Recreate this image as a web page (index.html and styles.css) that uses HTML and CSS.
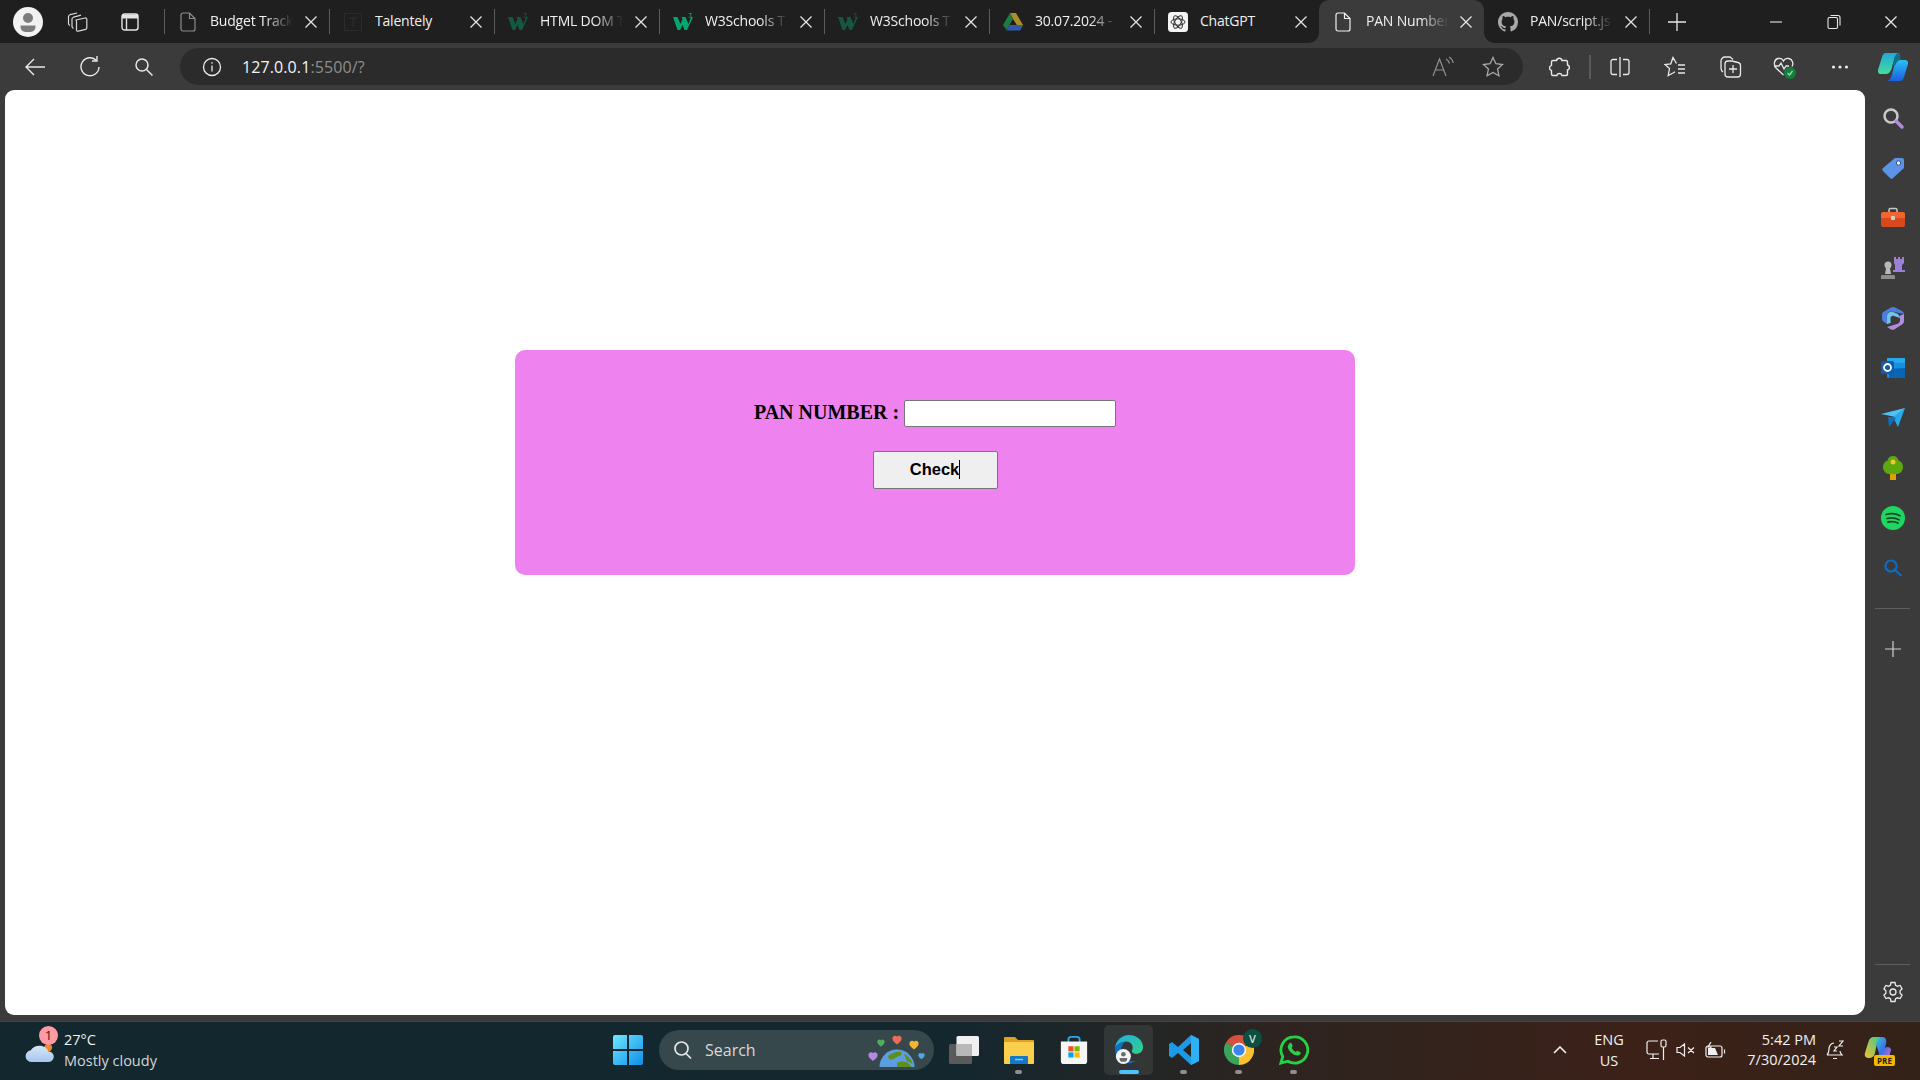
FILE: index.html
```html
<!DOCTYPE html>
<html lang="en">

<head>
    <meta charset="UTF-8">
    <meta name="viewport" content="width=device-width, initial-scale=1.0">
    <title>PAN Number</title>
    <link rel="stylesheet" href="styles.css">
</head>

<body>
    <svg class="defs" width="0" height="0">
        <symbol id="i-close" viewBox="0 0 14 14">
            <path d="M1.500 1.500l11 11M12.500 1.500l-11 11" fill="none" stroke="currentColor" stroke-width="1.300" />
        </symbol>
        <symbol id="i-doc" viewBox="0 0 16 20">
            <path d="M1 3a2 2 0 0 1 2-2h6.500L15 6.500V17a2 2 0 0 1-2 2H3a2 2 0 0 1-2-2zM9.500 1v5.500H15" fill="none" stroke="currentColor" stroke-width="1.200" />
        </symbol>
        <symbol id="i-w3" viewBox="0 0 20 18">
            <polygon points="0,4 4.500,4 7.500,11 9.500,6 8.500,4 12.500,4 15.500,11 18,4 20,4 14,17 11.500,17 9.500,12 7,17 4.500,17" fill="currentColor" />
            <path d="M15.500 .5h3l-1.400 1.500c1.400.2 1.400 2.400-.3 2.400-.6 0-1-.2-1.300-.5" fill="none" stroke="currentColor" stroke-width=".8" />
        </symbol>
        <symbol id="i-heart" viewBox="0 0 12 12">
            <path d="M6 11.500C2 8.500.5 6.500.5 4.200.5 2 2.200.8 3.800.8 4.800.8 5.500 1.300 6 2.200 6.500 1.300 7.200.8 8.200.8c1.600 0 3.300 1.200 3.300 3.400C11.500 6.500 10 8.500 6 11.500z" fill="currentColor" />
        </symbol>
    </svg>

    <div class="tabstrip">
        <div class="strip-start">
            <span class="profile">
                <svg width="30" height="30" viewBox="0 0 30 30">
                    <circle cx="15" cy="15" r="15" fill="#f2f2f2" />
                    <circle cx="15" cy="11" r="5" fill="#7c7c7c" />
                    <path d="M7.500 18.500h15v1.500a5 5 0 0 1-5 5h-5a5 5 0 0 1-5-5z" fill="#7c7c7c" />
                </svg>
            </span>
            <svg class="strip-icon" width="21" height="20" viewBox="0 0 21 20" fill="none" stroke="#d8d8d8" stroke-width="1.200">
                <path d="M9 8L18 6c1-.2 1.800.3 1.800 1.200V16c0 .8-.4 1.200-1.200 1.400l-7.300 1.800c-1 .2-1.800-.3-1.800-1.200V9.500C9.500 8.800 9 8.200 9 8z" />
                <path d="M6.500 16.500c-1-.5-1.500-1-1.500-2V7c0-1 .5-1.500 1.500-1.800L14 3.200" />
                <path d="M3 13.500c-1-.5-1.500-1-1.500-2V4.500c0-1 .5-1.500 1.500-1.800L10 1" />
            </svg>
            <svg class="strip-icon" width="18" height="18" viewBox="0 0 18 18" fill="none" stroke="#e4e4e4" stroke-width="1.400">
                <rect x="1" y="1" width="16" height="16" rx="2.500" />
                <path d="M1 3.500h16" stroke-width="4" />
                <path d="M5.500 5.500V17" />
            </svg>
        </div>
        <span class="sep"></span>

        <div class="tab">
            <svg class="favicon dim" width="20" height="20"><use href="#i-doc" /></svg>
            <span class="title fade">Budget Track</span>
            <svg class="close" width="14" height="14"><use href="#i-close" /></svg>
        </div>
        <span class="sep"></span>

        <div class="tab">
            <svg class="favicon" width="20" height="18" viewBox="0 0 18 18">
                <rect x=".5" y=".5" width="17" height="17" fill="none" stroke="#2b2b2b" />
                <path d="M5 5h8M9 5v9" stroke="#2b2b2b" stroke-width="1.500" />
            </svg>
            <span class="title">Talentely</span>
            <svg class="close" width="14" height="14"><use href="#i-close" /></svg>
        </div>
        <span class="sep"></span>

        <div class="tab">
            <svg class="favicon dark-green" width="20" height="18"><use href="#i-w3" /></svg>
            <span class="title fade">HTML DOM T</span>
            <svg class="close" width="14" height="14"><use href="#i-close" /></svg>
        </div>
        <span class="sep"></span>

        <div class="tab">
            <svg class="favicon bright-green" width="20" height="18"><use href="#i-w3" /></svg>
            <span class="title fade">W3Schools T</span>
            <svg class="close" width="14" height="14"><use href="#i-close" /></svg>
        </div>
        <span class="sep"></span>

        <div class="tab">
            <svg class="favicon dark-green" width="20" height="18"><use href="#i-w3" /></svg>
            <span class="title fade">W3Schools T</span>
            <svg class="close" width="14" height="14"><use href="#i-close" /></svg>
        </div>
        <span class="sep"></span>

        <div class="tab">
            <svg class="favicon" width="20" height="18" viewBox="0 0 20 18">
                <polygon points="7,0 13,0 20,12 17,17 10,6" fill="#a98f24" />
                <polygon points="7,0 10,6 3.500,17 0,12" fill="#1f7a43" />
                <polygon points="6.500,12 20,12 17,17.500 3.500,17.500" fill="#2f5aa8" />
            </svg>
            <span class="title fade">30.07.2024 -</span>
            <svg class="close" width="14" height="14"><use href="#i-close" /></svg>
        </div>
        <span class="sep"></span>

        <div class="tab">
            <svg class="favicon" width="20" height="20" viewBox="0 0 20 20">
                <rect width="20" height="20" rx="3.500" fill="#f4f4f4" />
                <g fill="none" stroke="#333" stroke-width="1">
                    <ellipse cx="10" cy="10" rx="7" ry="3.200" />
                    <ellipse cx="10" cy="10" rx="7" ry="3.200" transform="rotate(60 10 10)" />
                    <ellipse cx="10" cy="10" rx="7" ry="3.200" transform="rotate(120 10 10)" />
                </g>
            </svg>
            <span class="title">ChatGPT</span>
            <svg class="close" width="14" height="14"><use href="#i-close" /></svg>
        </div>

        <div class="tab active">
            <svg class="favicon bright" width="20" height="20"><use href="#i-doc" /></svg>
            <span class="title fade">PAN Number</span>
            <svg class="close" width="14" height="14"><use href="#i-close" /></svg>
        </div>

        <div class="tab tab-after-active">
            <svg class="favicon" width="20" height="20" viewBox="0 0 16 16">
                <path fill="#a8a8a8" d="M8 0C3.580 0 0 3.580 0 8c0 3.540 2.290 6.530 5.470 7.590.4.070.55-.17.55-.38 0-.19-.01-.82-.01-1.490-2.010.37-2.530-.49-2.690-.94-.09-.23-.48-.94-.82-1.130-.28-.15-.68-.52-.01-.53.630-.01 1.080.58 1.230.82.720 1.210 1.870.87 2.330.66.070-.52.280-.87.510-1.070-1.780-.2-3.640-.89-3.640-3.950 0-.87.310-1.590.820-2.150-.08-.2-.36-1.020.08-2.120 0 0 .67-.21 2.200.82.640-.18 1.320-.27 2-.27s1.360.09 2 .27c1.530-1.040 2.200-.82 2.200-.82.440 1.100.16 1.920.08 2.120.51.56.82 1.270.82 2.150 0 3.070-1.870 3.750-3.650 3.950.29.250.54.730.54 1.480 0 1.070-.01 1.930-.01 2.200 0 .21.150.46.550.38A8.010 8.010 0 0 0 16 8c0-4.420-3.580-8-8-8z" />
            </svg>
            <span class="title fade">PAN/script.js</span>
            <svg class="close" width="14" height="14"><use href="#i-close" /></svg>
        </div>
        <span class="sep"></span>

        <svg class="new-tab" width="20" height="20" viewBox="0 0 20 20">
            <path d="M10 1v18M1 10h18" stroke="#e8e8e8" stroke-width="1.300" />
        </svg>

        <div class="window-controls">
            <svg class="win-min" width="14" height="14" viewBox="0 0 14 14"><path d="M1 7h12" stroke="#e8e8e8" stroke-width="1.100" /></svg>
            <svg width="14" height="16" viewBox="0 0 14 16" fill="none" stroke="#e8e8e8" stroke-width="1.100">
                <rect x="1" y="3.500" width="9.500" height="11" rx="1.500" />
                <path d="M3.500 1.500h7.500a2 2 0 0 1 2 2v8" />
            </svg>
            <svg width="14" height="14"><use href="#i-close" /></svg>
        </div>
    </div>

    <div class="toolbar">
        <div class="nav-buttons">
            <svg width="22" height="20" viewBox="0 0 22 20" fill="none" stroke="#e8e8e8" stroke-width="1.400">
                <path d="M21 10H2M10 2l-8 8 8 8" />
            </svg>
            <svg width="22" height="22" viewBox="0 0 22 22" fill="none" stroke="#e8e8e8" stroke-width="1.400">
                <path d="M17.500 4.500A9 9 0 1 0 20 11" />
                <path d="M18 0v5h-5" />
            </svg>
            <svg width="20" height="20" viewBox="0 0 20 20" fill="none" stroke="#e8e8e8" stroke-width="1.500">
                <circle cx="8" cy="8" r="6" />
                <path d="M12.500 12.500L18.500 18.500" />
            </svg>
        </div>
        <div class="addressbar">
            <svg width="20" height="20" viewBox="0 0 20 20" fill="none" stroke="#ececec" stroke-width="1.300">
                <circle cx="10" cy="10" r="8.500" />
                <path d="M10 8.500v6M10 5.200v1.600" />
            </svg>
            <span class="url"><span class="host">127.0.0.1</span>:5500/?</span>
            <svg class="read-aloud" width="24" height="22" viewBox="0 0 24 22" fill="none" stroke="#8f8f8f" stroke-width="1.200">
                <path d="M2 20L8.500 3l6.500 17M4.500 14h8" />
                <path d="M15 3c2 1 3 2.500 3.500 4.500M18 1c2.500 1.500 3.800 3.500 4.300 6" />
            </svg>
            <svg width="22" height="22" viewBox="0 0 22 22" fill="none" stroke="#a8a8a8" stroke-width="1.300">
                <path d="M11 1.500l2.900 6.200 6.600.8-4.900 4.600 1.300 6.700L11 16.500l-5.900 3.300 1.300-6.700L1.500 8.500l6.600-.8z" />
            </svg>
        </div>
        <div class="tool-buttons">
            <svg width="22" height="22" viewBox="0 0 22 22" fill="none" stroke="#e8e8e8" stroke-width="1.400">
                <path d="M8.500 4.500a2.800 2.800 0 0 1 5.500 0H18a1.500 1.500 0 0 1 1.500 1.500v3a2.600 2.600 0 0 1 0 5v4a1.500 1.500 0 0 1-1.500 1.500h-4a2.700 2.700 0 0 0-5.200 0H5A1.500 1.500 0 0 1 3.500 18v-3.500a2.700 2.700 0 0 1 0-5.200V6A1.500 1.500 0 0 1 5 4.500z" />
            </svg>
            <span class="tool-sep"></span>
            <svg width="20" height="20" viewBox="0 0 20 20" fill="none" stroke="#e8e8e8" stroke-width="1.300">
                <path d="M7 2.500H3a2 2 0 0 0-2 2v11a2 2 0 0 0 2 2h4M13 2.500h4a2 2 0 0 1 2 2v11a2 2 0 0 1-2 2h-4M10 0v20" />
            </svg>
            <svg width="22" height="22" viewBox="0 0 22 22" fill="none" stroke="#e8e8e8" stroke-width="1.300">
                <path d="M12.500 7.500L9 1.500 6.800 7.800 1 8.500l4.500 4-1.300 7L9 17l2-1.200M14 9h7M14 13h7M14 17h7" />
            </svg>
            <svg width="22" height="24" viewBox="0 0 22 24" fill="none" stroke="#e8e8e8" stroke-width="1.300">
                <path d="M3 17c-1.200-1-2-2-2-3.500V6a4 4 0 0 1 4-4h5l3 2.500" />
                <path d="M5 19V9a3 3 0 0 1 3-3h4l6 1.500a3 3 0 0 1 2.500 3V19a3 3 0 0 1-3 3H8a3 3 0 0 1-3-3z" />
                <path d="M13 10v8M9 14h8" />
            </svg>
            <svg width="26" height="26" viewBox="0 0 26 26" fill="none" stroke="#e8e8e8" stroke-width="1.300">
                <path d="M11.500 21l-7-6.500C1 11 2 5.500 6 4.500c2.500-.6 4.500.5 5.500 2.500 1-2 3-3.100 5.500-2.500 3.500.9 4.800 5 3 8" />
                <path d="M2 12h5l2-3 3 6 2-3h3" />
                <circle cx="18" cy="19" r="6" fill="#12803a" stroke="none" />
                <path d="M15.500 19l2 2 3-4" stroke="#9fd9b0" />
            </svg>
            <svg width="18" height="6" viewBox="0 0 18 6"><circle cx="2.500" cy="3" r="1.600" fill="#e8e8e8" /><circle cx="9" cy="3" r="1.600" fill="#e8e8e8" /><circle cx="15.500" cy="3" r="1.600" fill="#e8e8e8" /></svg>
            <svg class="copilot" width="30" height="28" viewBox="0 0 30 28">
                <defs>
                    <linearGradient id="cp1" x1="0" y1="0" x2="0" y2="1"><stop offset="0" stop-color="#22a8d8" /><stop offset="1" stop-color="#45dc9c" /></linearGradient>
                    <linearGradient id="cp2" x1="0" y1="0" x2="0" y2="1"><stop offset="0" stop-color="#2bc0f0" /><stop offset="1" stop-color="#1d5ee0" /></linearGradient>
                </defs>
                <path d="M8 0h14c-3 0-4.500 2-5.500 5l-3 11c-1 3-3 5-6 5H3c-2.500 0-3.500-2-3-4L4 4C4.700 1.500 6 0 8 0z" fill="url(#cp1)" />
                <path d="M22 28H8c3 0 4.500-2 5.500-5l3-11c1-3 3-5 6-5H27c2.500 0 3.500 2 3 4L26 24c-.7 2.500-2 4-4 4z" fill="url(#cp2)" />
                <path d="M22 0c-3 0-4.500 2-5.500 5l-2 7h3c1-3 2.500-5 5-5z" fill="#0f6f8c" />
            </svg>
        </div>
    </div>

    <div class="browser-body">
        <main class="viewport">
            <form class="card">
                <div class="pan-row">
                    <label class="pan-label" for="pan">PAN NUMBER :</label>
                    <input class="pan-input" id="pan" type="text">
                </div>
                <button class="check-btn" type="button">Check<span class="caret"></span></button>
            </form>
        </main>

        <aside class="sidebar">
            <div class="side-apps">
                <svg width="24" height="24" viewBox="0 0 24 24" fill="none">
                    <circle cx="10" cy="10" r="6.500" stroke="#c9c9c9" stroke-width="2.500" />
                    <path d="M15 15l6 6" stroke="#b78ae0" stroke-width="3.500" stroke-linecap="round" />
                </svg>
                <svg width="24" height="24" viewBox="0 0 24 24">
                    <path d="M14 2h7a2 2 0 0 1 2 2v8L12 22a2 2 0 0 1-3 0l-7-7a2 2 0 0 1 0-3z" fill="#5c93e6" />
                    <circle cx="17.500" cy="7" r="2.200" fill="#f2f2f2" stroke="#30508a" />
                </svg>
                <svg width="24" height="22" viewBox="0 0 24 22">
                    <path d="M8 6V3a1.500 1.500 0 0 1 1.500-1.500h5A1.500 1.500 0 0 1 16 3v3" fill="none" stroke="#c8c8c8" stroke-width="1.500" />
                    <path d="M2 5h20a2 2 0 0 1 2 2v4H0V7a2 2 0 0 1 2-2z" fill="#f0662e" />
                    <path d="M0 11h24v7a2 2 0 0 1-2 2H2a2 2 0 0 1-2-2z" fill="#d84a1e" />
                    <rect x="10" y="9" width="4" height="4" rx="1" fill="#cfcfcf" />
                </svg>
                <svg width="24" height="24" viewBox="0 0 24 24">
                    <path d="M13 1h2v2h2V1h2v2h2V1h2v6l-2 2v5h3v2H12v-2h2V9l-1-2z" fill="#9b7fd8" />
                    <circle cx="7" cy="9" r="3.500" fill="#b8b8b8" />
                    <path d="M5 12h4l1 6H4z" fill="#b8b8b8" />
                    <path d="M1 19h12a2 2 0 0 1 1 2v2H0v-2a2 2 0 0 1 1-2z" fill="#8c8c8c" />
                </svg>
                <svg width="24" height="24" viewBox="0 0 24 24">
                    <path d="M13 1l8 4c1.500.8 2 2 2 3L11 5.500C8 5 6 7 6 10v8l-3-2c-1.500-1-2-2-2-3.500V9c0-2 1-3 2.500-3.700L10 1.500c1-.5 2-.7 3-.5z" fill="#4a7fe0" />
                    <path d="M23 8v7c0 1.500-.5 2.500-2 3.500l-7 4.500c-1.500 1-3 1-4 .5l-4-2.500 10-3c2-.6 3-2 3-4V9.500z" fill="#b18be0" />
                    <path d="M6 10c0-3 3-5 6-4l5 2 2 3v1l-6-2c-2-.5-3.500.5-3.500 2.500V17l-3.500 1z" fill="#6fc5e8" />
                </svg>
                <svg width="24" height="22" viewBox="0 0 24 22">
                    <rect x="6" y="1" width="18" height="20" rx="1.500" fill="#1490df" />
                    <path d="M6 1h18v5H6z" fill="#28a8ea" />
                    <path d="M8 12l16-1v10H8z" fill="#0a64b4" />
                    <rect x="0" y="4" width="13" height="13" rx="1.500" fill="#0f5cb0" />
                    <circle cx="6.500" cy="10.500" r="3.500" fill="none" stroke="#fff" stroke-width="1.800" />
                </svg>
                <svg width="24" height="20" viewBox="0 0 24 20">
                    <path d="M0 6l24-6-9 9z" fill="#4fc3f7" />
                    <path d="M24 0L12 9l5 10z" fill="#29a8e8" />
                    <path d="M7 9l5 0 3 1-7 9z" fill="#0f6ec0" />
                </svg>
                <svg width="22" height="26" viewBox="0 0 22 26">
                    <rect x="8" y="17" width="6" height="8" fill="#e0a000" />
                    <path d="M11 1c3 0 5 2 5.500 4.500C19.500 6.500 21 9 21 12c0 4-3 7-6 7H7c-3 0-6-3-6-7 0-3 1.500-5.500 4.500-6.500C6 3 8 1 11 1z" fill="#5da80f" />
                    <circle cx="11" cy="7" r="2.500" fill="#f3c623" />
                </svg>
                <svg width="24" height="24" viewBox="0 0 24 24">
                    <circle cx="12" cy="12" r="12" fill="#1ed760" />
                    <path d="M5 8.500c4.500-1.300 10-1 14 1.300M6 12.500c4-1 8.500-.7 12 1.200M7 16c3.500-.8 7-.5 10 1" fill="none" stroke="#17482a" stroke-width="1.800" stroke-linecap="round" />
                </svg>
                <svg width="20" height="20" viewBox="0 0 20 20" fill="none" stroke="#0f6cbd" stroke-width="2.200">
                    <circle cx="8" cy="8" r="5.500" />
                    <path d="M12 12l6.500 6" />
                </svg>
            </div>
            <span class="side-sep"></span>
            <svg class="side-add" width="16" height="16" viewBox="0 0 16 16"><path d="M8 0v16M0 8h16" stroke="#d0d0d0" stroke-width="1.200" /></svg>
            <span class="side-sep side-sep-low"></span>
            <svg class="side-gear" width="22" height="22" viewBox="0 0 22 22" fill="none" stroke="#e8e8e8" stroke-width="1.300">
                <circle cx="11" cy="11" r="3" />
                <path d="M9 1.500h4l.6 2.700 1.800 1 2.700-.8 2 3.400-2 1.900v2.600l2 1.900-2 3.400-2.700-.8-1.800 1-.6 2.700H9l-.6-2.700-1.800-1-2.700.8-2-3.400 2-1.900V9.700l-2-1.900 2-3.400 2.700.8 1.800-1z" />
            </svg>
        </aside>
    </div>

    <footer class="taskbar">
        <div class="weather">
            <span class="weather-icon">
                <svg width="31" height="20" viewBox="0 0 32 22" preserveAspectRatio="none">
                    <defs>
                        <linearGradient id="cloud" x1="0" y1="0" x2="0" y2="1"><stop offset="0" stop-color="#d4e5f8" /><stop offset="1" stop-color="#a9c6ee" /></linearGradient>
                    </defs>
                    <circle cx="25" cy="5" r="4" fill="#f08a24" />
                    <path d="M8 21a6.500 6.500 0 0 1-1-12.900C8.500 5 12 3 16 3c4.500 0 8 2.500 9 6a6 6 0 0 1-.5 12z" fill="url(#cloud)" />
                </svg>
                <span class="weather-badge">1</span>
            </span>
            <div class="weather-text">
                <span class="temp">27°C</span>
                <span class="sky">Mostly cloudy</span>
            </div>
        </div>

        <div class="task-center">
            <svg class="start" width="30" height="30" viewBox="0 0 30 30">
                <defs>
                    <linearGradient id="win" x1="0" y1="0" x2="1" y2="1"><stop offset="0" stop-color="#6fe6ff" /><stop offset="1" stop-color="#0f8fe8" /></linearGradient>
                </defs>
                <path d="M0 2a2 2 0 0 1 2-2h12v14H0zM16 0h12a2 2 0 0 1 2 2v12H16zM0 16h14v14H2a2 2 0 0 1-2-2zM16 16h14v12a2 2 0 0 1-2 2H16z" fill="url(#win)" />
            </svg>
            <div class="searchbox">
                <svg width="20" height="20" viewBox="0 0 20 20" fill="none" stroke="#e8e8e8" stroke-width="1.700">
                    <circle cx="8.500" cy="8.500" r="6.500" />
                    <path d="M13 13.500l5 5" />
                </svg>
                <span class="search-text">Search</span>
                <svg class="search-art" width="60" height="40" viewBox="0 0 60 40">
                    <defs>
                        <clipPath id="globe-clip"><rect x="0" y="0" width="60" height="37" /></clipPath>
                    </defs>
                    <use href="#i-heart" x="26" y="5" width="10" height="10" color="#ec6c55" />
                    <use href="#i-heart" x="43" y="10" width="10" height="10" color="#f2b632" />
                    <use href="#i-heart" x="11" y="9" width="8" height="8" color="#4fae5e" />
                    <use href="#i-heart" x="2" y="21" width="10" height="11" color="#b48ae0" />
                    <use href="#i-heart" x="52" y="22" width="7" height="8" color="#4aa8e4" />
                    <g clip-path="url(#globe-clip)">
                        <circle cx="31" cy="37" r="17.500" fill="#5c9ee0" />
                        <path d="M22 26c4-3 9-5 13-4 2 4-3 4-6 6-2 2-4 2-6 1zM31 33c4-2 9-2 12 1l3 3H31zM38 24c3 1 7 5 9 10l-6-3z" fill="#5d8f1c" />
                    </g>
                </svg>
            </div>
            <div class="task-apps">
                <div class="task-app">
                    <svg width="30" height="28" viewBox="0 0 30 28">
                        <rect x="0" y="8" width="23" height="20" rx="1.500" fill="#5a5a5a" />
                        <rect x="7.500" y="0" width="22.500" height="20" rx="1.500" fill="#f0f0f0" />
                        <rect x="7.500" y="8" width="15.500" height="12" fill="#b8b8b8" />
                    </svg>
                </div>
                <div class="task-app">
                    <svg width="30" height="28" viewBox="0 0 30 28">
                        <path d="M0 2a1 1 0 0 1 1-1h10l3 3h15a1 1 0 0 1 1 1v4H0z" fill="#e0a020" />
                        <path d="M0 6h30v21a1 1 0 0 1-1 1H1a1 1 0 0 1-1-1z" fill="#fbcf4e" />
                        <path d="M7 20h16a1 1 0 0 1 1 1v7H6v-7a1 1 0 0 1 1-1z" fill="#1478c8" />
                        <path d="M11 23.500h8" stroke="#8cc8f0" stroke-width="1.500" />
                    </svg>
                    <i class="dot"></i>
                </div>
                <div class="task-app">
                    <svg width="30" height="30" viewBox="0 0 30 32">
                        <path d="M9 8V5a3 3 0 0 1 3-3h6a3 3 0 0 1 3 3v3" fill="none" stroke="#29a8e8" stroke-width="2" />
                        <path d="M1 7h28v21a3 3 0 0 1-3 3H4a3 3 0 0 1-3-3z" fill="#f6f6f6" />
                        <rect x="9" y="12" width="5.500" height="5.500" fill="#f25022" />
                        <rect x="15.500" y="12" width="5.500" height="5.500" fill="#7fba00" />
                        <rect x="9" y="18.500" width="5.500" height="5.500" fill="#00a4ef" />
                        <rect x="15.500" y="18.500" width="5.500" height="5.500" fill="#ffb900" />
                    </svg>
                </div>
                <div class="task-app current">
                    <svg width="30" height="32" viewBox="0 0 32 34">
                        <defs>
                            <linearGradient id="edge" x1="0" y1="0" x2="1" y2="1"><stop offset="0" stop-color="#1faee0" /><stop offset="1" stop-color="#33d08a" /></linearGradient>
                        </defs>
                        <path d="M16 1c9 0 15 6 15 13 0 4-3 7-7 7-3 0-5-1-5-3 0-1 1-1.500 1-3.500C20 11 17 8 13 8 8 8 3 11 1 15 2 7 8 1 16 1z" fill="url(#edge)" />
                        <path d="M1 15c2-4 7-7 12-7-5 2-6 8-5 12 1 5 6 9 12 9 2 0 3 0 4-1-2 2-5 3-8 3-9 0-15-7-15-16z" fill="#0f6fc8" />
                        <circle cx="10" cy="24" r="8" fill="#f4f4f4" />
                        <circle cx="10" cy="21.500" r="2.500" fill="#6a6a6a" />
                        <path d="M6 25.500h8v1a3 3 0 0 1-3 3H9a3 3 0 0 1-3-3z" fill="#6a6a6a" />
                    </svg>
                    <i class="dot wide"></i>
                </div>
                <div class="task-app">
                    <svg width="30" height="30" viewBox="0 0 30 30">
                        <path d="M22 0l8 4v22l-8 4-13-12-6 5-3-2v-12l3-2 6 5zM22 8l-8 7 8 7z" fill="#1c9ae8" />
                        <path d="M22 0l8 4v22l-8 4z" fill="#2db0f5" />
                    </svg>
                    <i class="dot"></i>
                </div>
                <div class="task-app chrome">
                    <svg width="30" height="30" viewBox="0 0 30 30">
                        <path d="M15 15L2 7.500A15 15 0 0 1 28 7.500z" fill="#d94f3d" />
                        <path d="M15 15L28 7.500A15 15 0 0 1 15 30z" fill="#fbc02d" />
                        <path d="M15 15L15 30A15 15 0 0 1 2 7.500z" fill="#3aa55a" />
                        <circle cx="15" cy="15" r="7.200" fill="#f4f4f4" />
                        <circle cx="15" cy="15" r="5.600" fill="#3a86f0" />
                    </svg>
                    <span class="chrome-badge">V</span>
                    <i class="dot"></i>
                </div>
                <div class="task-app">
                    <svg width="30" height="30" viewBox="0 0 32 32">
                        <path d="M16 2a14 14 0 0 0-12 21l-2 7 7.500-2A14 14 0 1 0 16 2z" fill="none" stroke="#27d045" stroke-width="3" />
                        <path d="M11 9c1-1 2-1 2.500 0l1 2.500c.2.500 0 1-1 2 1 2 2.500 3.500 4.500 4.500 1-1 1.500-1.300 2-1l2.500 1.200c1 .5 1 1.500 0 2.500-1.500 1.500-4 1.500-7 0-3-1.700-5-4-6-7-.5-2 .5-3.500 1.500-4.700z" fill="#27d045" />
                    </svg>
                    <i class="dot"></i>
                </div>
            </div>
        </div>

        <div class="tray">
            <svg class="tray-up" width="14" height="8" viewBox="0 0 14 8" fill="none" stroke="#f0f0f0" stroke-width="1.600"><path d="M1 7l6-6 6 6" /></svg>
            <div class="lang">ENG<br>US</div>
            <svg class="tray-monitor" width="22" height="22" viewBox="0 0 22 22" fill="none" stroke="#f0f0f0" stroke-width="1.200">
                <path d="M13 15H3a2 2 0 0 1-2-2V4a2 2 0 0 1 2-2h9M7 15v4M4 19.500h9" />
                <rect x="15" y="1" width="5" height="7" rx="1.500" />
                <path d="M17.500 8v13" />
            </svg>
            <svg class="tray-vol" width="20" height="14" viewBox="0 0 20 14" fill="none" stroke="#f0f0f0" stroke-width="1.200">
                <path d="M1 4.500h3L8.500 1v12L4 9.500H1zM12 4.500l6 5.500M18 4.500L12 10" />
            </svg>
            <svg class="tray-bat" width="21" height="16" viewBox="0 0 21 16" fill="none" stroke="#f0f0f0" stroke-width="1.200">
                <rect x="1" y="4" width="16" height="11" rx="2" />
                <path d="M19.500 7.500v4" />
                <path d="M3 13V6h7l3 7z" fill="#f0f0f0" stroke="none" />
                <path d="M6 0L3 5h3L4 9" />
            </svg>
            <div class="clock">5:42 PM<br>7/30/2024</div>
            <svg class="tray-bell" width="18" height="20" viewBox="0 0 18 20" fill="none" stroke="#f0f0f0" stroke-width="1.200">
                <path d="M1 15c2-2 2-3 2-6 0-3 2-6 5-6M7 18.500h4M1 15h15c-1.500-1.500-2-2.500-2-4" />
                <path d="M8 7h3l-3 4h3M13 1h4l-4 5h4" />
            </svg>
            <span class="copilot-pre">
                <svg width="28" height="26" viewBox="0 0 28 26">
                    <defs>
                        <linearGradient id="pre" x1="0" y1="0" x2="1" y2="1"><stop offset="0" stop-color="#36c9d8" /><stop offset=".5" stop-color="#3a6fe8" /><stop offset="1" stop-color="#e86ac8" /></linearGradient>
                        <linearGradient id="pre2" x1="0" y1="1" x2="1" y2="0"><stop offset="0" stop-color="#f0c030" /><stop offset="1" stop-color="#40c890" /></linearGradient>
                    </defs>
                    <path d="M9 1h8c-3 2-4 6-5 11l-1 5c-.5 3-3 5-6 5-3 0-5-2-4-5l3-10c1-4 3-6 5-6z" fill="url(#pre2)" />
                    <path d="M12 8c1-4 3-7 6-7 4 0 5 3 4 7l-1 4c2-2 6-1 6 2l-2 7c-1 3-3 4-5 4h-8c2-2 3-5 3-8z" fill="url(#pre)" />
                </svg>
                <span class="pre-tag">PRE</span>
            </span>
        </div>
    </footer>
</body>

</html>
```

FILE: styles.css
```css
* {
    margin: 0;
    padding: 0;
    box-sizing: border-box;
}

body {
    width: 100%;
    height: 100vh;
    display: flex;
    flex-direction: column;
    overflow: hidden;
    background-color: #3b3b3b;
    font-family: "Open Sans", "Noto Sans", sans-serif;
}

.defs {
    position: absolute;
}

/* tab strip */

.tabstrip {
    height: 43px;
    display: flex;
    align-items: center;
    background-color: #1f1f1f;
    color: #f0f0f0;
}

.strip-start {
    width: 164px;
    display: flex;
    align-items: center;
    padding-left: 13px;
}

.profile {
    display: flex;
    width: 30px;
    height: 30px;
}

.strip-icon {
    margin-left: 24px;
}

.strip-icon + .strip-icon {
    margin-left: 33px;
}

.sep {
    flex: none;
    width: 1px;
    height: 25px;
    background-color: #5c5c5c;
}

.tab {
    position: relative;
    flex: none;
    width: 164px;
    height: 43px;
    display: flex;
    align-items: center;
    padding-left: 13px;
}

.favicon {
    flex: none;
    width: 20px;
    color: #bbb;
}

.favicon.dim {
    color: #8c8c8c;
}

.favicon.bright {
    color: #f0f0f0;
}

.favicon.dark-green {
    color: #15573f;
}

.favicon.bright-green {
    color: #04a66d;
}

.title {
    position: absolute;
    left: 45px;
    top: 11px;
    width: 88px;
    overflow: hidden;
    white-space: nowrap;
    font-size: 14px;
    letter-spacing: -.2px;
}

.title.fade {
    -webkit-mask-image: linear-gradient(to right, #000 62%, transparent 94%);
    mask-image: linear-gradient(to right, #000 62%, transparent 94%);
}

.close {
    position: absolute;
    left: 139px;
    color: #e4e4e4;
}

.tab.active {
    width: 165px;
    padding-left: 14px;
    background-color: #3b3b3b;
    border-radius: 10px 10px 0 0;
}

.tab.active .title {
    left: 47px;
}

.tab.active .close {
    left: 140px;
}

.tab.active::before,
.tab.active::after {
    content: "";
    position: absolute;
    bottom: 0;
    width: 10px;
    height: 10px;
    background: radial-gradient(circle at 0 0, #1f1f1f 9.500px, #3b3b3b 10px);
}

.tab.active::before {
    left: -10px;
}

.tab.active::after {
    right: -10px;
    background: radial-gradient(circle at 100% 0, #1f1f1f 9.500px, #3b3b3b 10px);
}

.tab-after-active {
    margin-left: 1px;
}

.new-tab {
    flex: none;
    margin-left: 17px;
}

.window-controls {
    margin-left: auto;
    display: flex;
    align-items: center;
    gap: 43px;
    padding-right: 22px;
    color: #e8e8e8;
}

.win-min {
    margin-right: 1px;
}

/* address row */

.toolbar {
    height: 47px;
    display: flex;
    align-items: center;
    background-color: #3b3b3b;
}

.nav-buttons {
    width: 180px;
    display: flex;
    align-items: center;
    gap: 33px;
    padding-left: 24px;
}

.addressbar {
    width: 1343px;
    height: 37px;
    display: flex;
    align-items: center;
    padding: 0 19px 0 22px;
    border-radius: 19px;
    background-color: #2b2b2b;
}

.url {
    margin-left: 20px;
    font-size: 16px;
    letter-spacing: .1px;
    color: #8e8e8e;
}

.host {
    color: #f4f4f4;
}

.read-aloud {
    margin-left: auto;
    margin-right: 27px;
}

.tool-buttons {
    flex: 1;
    display: flex;
    align-items: center;
    padding-left: 25px;
}

.tool-sep {
    width: 2px;
    height: 24px;
    margin: 0 19px;
    background-color: #5a5a5a;
}

.tool-buttons svg:nth-of-type(3) {
    margin-left: 34px;
}

.tool-buttons svg:nth-of-type(4) {
    margin-left: 34px;
}

.tool-buttons svg:nth-of-type(5) {
    margin-left: 30px;
}

.tool-buttons svg:nth-of-type(6) {
    margin-left: 33px;
}

.tool-buttons .copilot {
    margin-left: 29px;
}

/* page + sidebar */

.browser-body {
    flex: 1;
    display: flex;
    min-height: 0;
}

.viewport {
    width: 1860px;
    height: 925px;
    margin-left: 5px;
    padding-top: 260px;
    border-radius: 9px 9px 12px 9px;
    background-color: white;
}

.card {
    width: 840px;
    height: 225px;
    margin: 0 auto;
    padding-top: 50px;
    display: flex;
    flex-direction: column;
    align-items: center;
    gap: 24px;
    border-radius: 10px;
    background-color: violet;
}

.pan-row {
    display: flex;
    align-items: center;
    gap: 5px;
}

.pan-label {
    margin-bottom: 2px;
    font-family: "Liberation Serif", serif;
    font-size: 20px;
    font-weight: bold;
    color: black;
}

.pan-input {
    width: 212px;
    height: 27px;
    border: 1px solid #767676;
    border-radius: 2px;
    background-color: white;
}

.check-btn {
    width: 125px;
    height: 38px;
    padding-bottom: 2px;
    border: 1px solid #767676;
    border-radius: 2px;
    background-color: #efefef;
    font-family: "Liberation Sans", Arial, sans-serif;
    font-size: 16.500px;
    font-weight: bold;
    color: black;
}

.caret {
    display: inline-block;
    width: 1px;
    height: 19px;
    vertical-align: -4px;
    background-color: black;
}

.sidebar {
    flex: 1;
    display: flex;
    flex-direction: column;
    align-items: center;
    padding-top: 3px;
}

.side-apps {
    width: 100%;
    display: grid;
    grid-auto-rows: 50px;
    place-items: center;
}

.side-sep {
    flex: none;
    width: 35px;
    height: 1px;
    margin-top: 15px;
    background-color: #5e5e5e;
}

.side-add {
    flex: none;
    margin-top: 32px;
}

.side-sep-low {
    margin-top: 307px;
}

.side-gear {
    flex: none;
    margin-top: 16px;
}

/* taskbar */

.taskbar {
    height: 59px;
    padding-bottom: 2px;
    display: flex;
    align-items: center;
    background: linear-gradient(to right, #13272f 0, #14272e 50%, #2d2420 66%, #3c2118 86%, #332218 100%);
    box-shadow: inset 0 1px 0 #3f4345;
    color: #f2f2f2;
}

.weather {
    width: 613px;
    display: flex;
    align-items: center;
    padding-left: 24px;
}

.weather-icon {
    position: relative;
    display: flex;
    width: 32px;
    height: 20px;
    margin-top: 6px;
}

.weather-badge {
    position: absolute;
    left: 15px;
    top: -17px;
    width: 19px;
    height: 19px;
    border-radius: 50%;
    background-color: #ff9aa2;
    color: #222;
    font-size: 13px;
    line-height: 19px;
    text-align: center;
}

.weather-text {
    display: flex;
    flex-direction: column;
    margin-left: 8px;
    font-size: 14.500px;
    line-height: 21px;
}

.sky {
    color: #d6d6d6;
}

.task-center {
    display: flex;
    align-items: center;
}

.searchbox {
    width: 275px;
    height: 40px;
    margin-left: 16px;
    display: flex;
    align-items: center;
    padding: 0 8px 0 14px;
    border-radius: 20px;
    background-color: #37484c;
}

.search-text {
    margin-left: 12px;
    font-size: 16px;
    color: #d8d8d8;
}

.search-art {
    margin-left: auto;
}

.task-apps {
    display: flex;
    margin-left: 2px;
}

.task-app {
    position: relative;
    width: 55px;
    height: 50px;
    display: flex;
    align-items: center;
    justify-content: center;
}

.task-app.current {
    width: 49px;
    margin: 0 3px;
    border-radius: 5px;
    background-color: rgba(255, 255, 255, .08);
}

.dot {
    position: absolute;
    bottom: 1px;
    width: 7px;
    height: 4px;
    border-radius: 2px;
    background-color: #8f8f8f;
}

.dot.wide {
    width: 20px;
    background-color: #4cc2ff;
}

.chrome-badge {
    position: absolute;
    top: 4px;
    left: 32px;
    width: 19px;
    height: 19px;
    border-radius: 50%;
    background-color: #0d4f43;
    font-size: 11px;
    font-weight: 600;
    line-height: 19px;
    text-align: center;
    color: #cfe0da;
}

.tray {
    flex: 1;
    display: flex;
    align-items: center;
    padding-left: 232px;
}

.lang {
    width: 40px;
    margin-left: 22px;
    font-size: 14.500px;
    line-height: 21px;
    text-align: center;
}

.tray-monitor {
    margin-left: 17px;
}

.tray-vol {
    margin-left: 8px;
}

.tray-bat {
    margin-left: 9px;
}

.clock {
    width: 80px;
    margin-left: 10px;
    font-size: 14.500px;
    line-height: 20px;
    text-align: right;
}

.tray-bell {
    margin-left: 10px;
}

.copilot-pre {
    position: relative;
    width: 30px;
    height: 28px;
    margin-left: 20px;
}

.pre-tag {
    position: absolute;
    right: -1px;
    bottom: -2px;
    width: 21px;
    height: 11px;
    border-radius: 2px;
    background-color: #f5b800;
    font-size: 8px;
    font-weight: 700;
    line-height: 11px;
    text-align: center;
    color: #222;
}
```
